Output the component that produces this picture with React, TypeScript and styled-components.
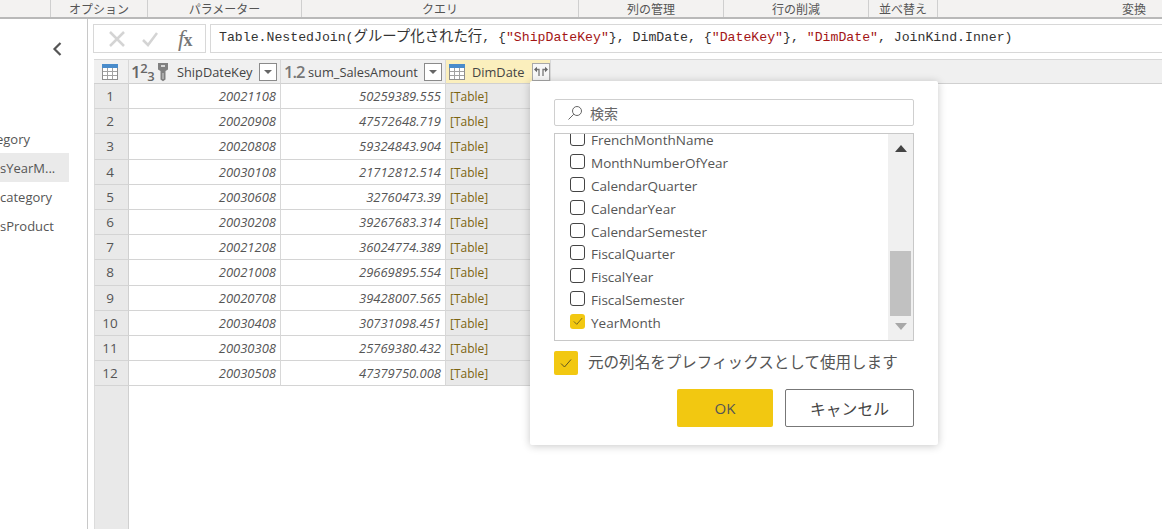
import React from 'react';
import styled, { createGlobalStyle } from 'styled-components';

const Global = createGlobalStyle`
  html, body { margin: 0; padding: 0; background: #fff; overflow: hidden; }
  * { box-sizing: border-box; }
`;
const ui = `"Open Sans", "Noto Sans CJK JP", sans-serif`;
const Page = styled.div`
  position: relative; width: 1162px; height: 529px; overflow: hidden;
  display: flex; flex-direction: column; font-family: ${ui}; color: #555;
`;
const Ribbon = styled.div`
  display: grid; height: 19px; flex: none; background: #f3f2f1; border-bottom: 2px solid #b9b9b9; overflow: hidden;
  grid-template-columns: 51px 97px 154px 277px 145px 145px 69px 392px;
`;
const RibbonGroup = styled.div<{ $sep?: boolean }>`
  height: 17px; font-size: 12px; line-height: 19px; text-align: center; color: #555; white-space: nowrap;
  overflow: hidden; border-right: ${p => (p.$sep ? '1px solid #cfcfcf' : '0')};
`;
const Body = styled.div`display: flex; flex: 1; min-height: 0;`;
const Side = styled.aside`
  width: 88px; flex: none; border-right: 1px solid #c8c8c8; display: flex; flex-direction: column;
`;
const Collapse = styled.div`height: 60px; padding: 21px 0 0 52px; flex: none;`;
const QueryList = styled.div`display: flex; flex-direction: column; margin-top: 45px; width: 69px;`;
const Query = styled.div<{ $active?: boolean; $indent?: number }>`
  height: 29px; line-height: 30px; font-size: 13px; color: #555; white-space: nowrap; overflow: hidden;
  text-indent: ${p => p.$indent ?? 0}px;
  background: ${p => (p.$active ? '#eaeaea' : 'transparent')};
`;
const Main = styled.main`flex: 1; min-width: 0; padding: 5px 0 0 5px; display: flex; flex-direction: column;`;
const FormulaRow = styled.div`display: flex; gap: 4px; height: 29px; flex: none;`;
const FormulaTools = styled.div`
  width: 113px; border: 1px solid #d8d8d8; display: flex; align-items: center; padding-left: 14px; gap: 15px;
`;
const Fx = styled.span`
  font-family: "Liberation Serif", serif; font-style: italic; font-size: 23px; color: #777; margin-left: 4px; line-height: 1;
  b { font-style: normal; font-size: 18px; font-weight: 700; margin-left: -1px; }
`;
const Formula = styled.div`
  flex: 1; border: 1px solid #d8d8d8; border-right: 0; padding-left: 8px; line-height: 26px; white-space: pre;
  font-family: "Liberation Mono", "Noto Sans CJK JP", monospace; font-size: 13.2px; color: #333;
`;
const Cjk = styled.span`font-family: "Noto Sans CJK JP", sans-serif; font-size: 14.4px; line-height: 1;`;
const Str = styled.span`color: #a31515;`;
const Table = styled.div`
  margin: 6px 0 0 1px; flex: 1; display: grid; position: relative;
  grid-template-columns: 35px 152px 165px 105px 1fr;
  grid-template-rows: 25px repeat(12, 25.2px) 1fr;
`;
const Head = styled.div<{ $sel?: boolean }>`
  background: ${p => (p.$sel ? '#fbefbd' : '#f0f0f0')};
  border-top: 1px solid #d8d8d8; border-bottom: 1px solid #d0d0d0; border-right: 1px solid #d8d8d8;
  display: flex; align-items: center; font-size: 12.8px; color: #444; min-width: 0; white-space: nowrap;
`;
const HeadFill = styled.div`background: #f0f0f0; border-top: 1px solid #d8d8d8; border-bottom: 1px solid #d0d0d0;`;
const CornerHead = styled(Head)`justify-content: center; padding-right: 2px;`;
const TypeNum = styled.span`
  font-size: 17px; color: #666; width: 27px; margin-left: 2px; font-weight: 600; flex: none; letter-spacing: -.5px; line-height: 1;
  sup { font-size: 13px; vertical-align: 5px; line-height: 0; }
  sub { font-size: 13px; vertical-align: -3px; line-height: 0; }
`;
const KeyWrap = styled.span`display: flex; flex: none; margin-right: 9px;`;
const Decimal = styled.span`
  font-size: 16.5px; color: #777; font-weight: 600; width: 24px; margin-left: 3px; flex: none; letter-spacing: -1px;
`;
const Title = styled.span`flex: 1; min-width: 0;`;
const HeadBtn = styled.div`
  width: 18px; height: 18px; flex: none; background: #fff; border: 1px solid #8a8a8a; margin-right: 3px;
  display: flex; align-items: center; justify-content: center;
`;
const ExpandBtn = styled(HeadBtn)`background: #f7f7f7; border-color: #a8a8a8; margin-right: 0;`;
const Arrow = styled.i`
  width: 0; height: 0; border-left: 4px solid transparent; border-right: 4px solid transparent; border-top: 4px solid #666;
`;
const RowNum = styled.div<{ $fill?: boolean }>`
  background: #e9e9e9; border-right: 1px solid #d0d0d0; border-left: 1px solid #dcdcdc;
  border-bottom: ${p => (p.$fill ? 0 : '1px solid #d4d4d4')};
  font-size: 13.5px; color: #555; display: flex; align-items: center; justify-content: center; padding-right: 3px;
`;
const Cell = styled.div`
  border-right: 1px solid #d8d8d8; border-bottom: 1px solid #d4d4d4; font-style: italic; font-size: 13px; color: #555;
  text-align: right; padding-right: 4px; line-height: 25px; white-space: nowrap; overflow: hidden;
`;
const TableCell = styled.div`
  background: #e9e9e9; border-bottom: 1px solid #d4d4d4; border-right: 1px solid #d8d8d8; font-size: 12px; color: #7c6410;
  padding-left: 4px; line-height: 25px;
`;
const Filler = styled.div`grid-column: 2 / -1;`;
const Blank = styled.div``;
const Dialog = styled.section`
  position: absolute; left: 530px; top: 81px; width: 408px; height: 364px; background: #fff;
  box-shadow: 0 1px 9px rgba(0,0,0,.22); padding: 18px 24px; display: flex; flex-direction: column; border-radius: 2px;
`;
const Search = styled.div`
  height: 27px; flex: none; border: 1px solid #cfcfcf; border-radius: 2px; display: flex; align-items: center; padding-left: 12px; gap: 7px;
  font-size: 14px; color: #666;
`;
const List = styled.div`
  margin-top: 7px; height: 208px; flex: none; border: 1px solid #c8c8c8; display: flex; overflow: hidden;
`;
const Items = styled.div`flex: 1; padding-left: 15px; overflow: hidden; margin-top: -5px;`;
const Item = styled.div`
  display: flex; align-items: center; gap: 6px; height: 22.8px; font-size: 13.5px; color: #555; white-space: nowrap;
`;
const Box = styled.span<{ $on?: boolean; $size: number }>`
  width: ${p => p.$size}px; height: ${p => p.$size}px; flex: none; border-radius: ${p => (p.$size > 20 ? 2 : 3)}px;
  background: ${p => (p.$on ? '#f2c811' : '#fff')}; border: ${p => (p.$on ? '0' : '1px solid #444')};
  display: flex; align-items: center; justify-content: center;
`;
const ItemBox = styled(Box)`margin-bottom: 3px;`;
const Scroll = styled.div`
  width: 25px; flex: none; background: #f0f0f0; display: flex; flex-direction: column; align-items: center; position: relative; padding: 11px 2px 0;
`;
const Up = styled.i`width: 0; height: 0; border-left: 6px solid transparent; border-right: 6px solid transparent; border-bottom: 7px solid #444; flex: none;`;
const Thumb = styled.div`width: 21px; height: 65px; background: #c1c1c1; margin-top: 99px; flex: none;`;
const Down = styled.i`width: 0; height: 0; border-left: 6px solid transparent; border-right: 6px solid transparent; border-top: 7px solid #a8a8a8; margin-top: 7px; flex: none;`;
const Prefix = styled.div`
  margin-top: 10px; height: 24px; flex: none; display: flex; align-items: center; gap: 10px; font-size: 15.55px; color: #555; white-space: nowrap;
`;
const PrefixLabel = styled.span`margin-bottom: 3px;`;
const Actions = styled.div`margin-top: 14px; display: flex; justify-content: flex-end; gap: 12px;`;
const Ok = styled.div`
  width: 96px; height: 38px; background: #f2c811; border-radius: 2px; font-size: 15px; color: #555;
  display: flex; align-items: center; justify-content: center;
`;
const Cancel = styled.div`
  width: 129px; height: 38px; border: 1px solid #777; border-radius: 2px; font-size: 15.8px; color: #444;
  display: flex; align-items: center; justify-content: center;
`;
const HeadTable = styled.svg`margin-left: 3px; margin-right: 7px; flex: none;`;

const TableGlyph = () => (
  <>
    <rect x=".5" y=".5" width="15" height="15" fill="#fff" stroke="#8f8f8f" />
    <rect width="16" height="4" fill="#4a8ccb" />
    <path d="M5.500 4v11M10.500 4v11M1 7.500h14M1 11.500h14" stroke="#a2a2a2" fill="none" />
  </>
);
const KeyIcon = () => (
  <svg width="10" height="20" viewBox="0 0 10 20">
    <path d="M0 1h10v6.500l-2.500 1.500v8.500l-2.500 1.800-2.500-1.800v-8.500L0 7.500z" fill="#808080" />
    <rect x="3" y="3" width="4" height="2" fill="#d6d6d6" />
    <path d="M5 11v6" stroke="#d6d6d6" />
  </svg>
);
const ExpandIcon = () => (
  <svg width="14" height="12" viewBox="0 0 14 12">
    <path d="M0 3.500 3 .8v5.400z" fill="#666" />
    <path d="M2.500 3.500H5V10" fill="none" stroke="#777" strokeWidth="1.300" />
    <path d="M14 3.500 11 .8v5.400z" fill="#666" />
    <path d="M11.500 3.500H9V10" fill="none" stroke="#777" strokeWidth="1.300" />
  </svg>
);
const Check = ({ s }: { s: number }) => (
  <svg width={s} height={s} viewBox="0 0 12 12">
    <path d="M1 6.500 4.500 10 11 2.500" fill="none" stroke="#5f5520" strokeWidth="1" />
  </svg>
);
const Magnifier = () => (
  <svg width="16" height="16" viewBox="0 0 16 16">
    <circle cx="10" cy="6" r="4.500" fill="none" stroke="#666" strokeWidth="1" />
    <path d="M6.800 9.200 1.500 14.500" stroke="#666" strokeWidth="1" />
  </svg>
);

const groups = ['', 'オプション', 'パラメーター', 'クエリ', '列の管理', '行の削減', '並べ替え', '変換'];
const rows = [
  ['20021108', '50259389.555'], ['20020908', '47572648.719'], ['20020808', '59324843.904'], ['20030108', '21712812.514'],
  ['20030608', '32760473.39'], ['20030208', '39267683.314'], ['20021208', '36024774.389'], ['20021008', '29669895.554'],
  ['20020708', '39428007.565'], ['20030408', '30731098.451'], ['20030308', '25769380.432'], ['20030508', '47379750.008'],
];
const fields = ['FrenchMonthName', 'MonthNumberOfYear', 'CalendarQuarter', 'CalendarYear', 'CalendarSemester', 'FiscalQuarter', 'FiscalYear', 'FiscalSemester'];

export default function App() {
  return (
    <Page>
      <Global />
      <Ribbon>
        {groups.map((g, i) => <RibbonGroup key={i} $sep={i < 7}>{g}</RibbonGroup>)}
      </Ribbon>
      <Body>
        <Side>
          <Collapse>
            <svg width="11" height="16" viewBox="0 0 11 16"><path d="M8.500 2 2.500 8l6 6" fill="none" stroke="#555" strokeWidth="2.200" /></svg>
          </Collapse>
          <QueryList>
            <Query $indent={-4}>egory</Query>
            <Query $active>sYearM...</Query>
            <Query>category</Query>
            <Query>sProduct</Query>
          </QueryList>
        </Side>
        <Main>
          <FormulaRow>
            <FormulaTools>
              <svg width="18" height="18" viewBox="0 0 18 18"><path d="M2 2l14 14M16 2 2 16" stroke="#d4d4d4" strokeWidth="2.500" /></svg>
              <svg width="18" height="16" viewBox="0 0 18 16"><path d="M2 9l5 5L16 2" fill="none" stroke="#d4d4d4" strokeWidth="2.500" /></svg>
              <Fx>f<b>x</b></Fx>
            </FormulaTools>
            <Formula>Table.NestedJoin(<Cjk>グループ化された行</Cjk>, {'{'}<Str>"ShipDateKey"</Str>{'}'}, DimDate, {'{'}<Str>"DateKey"</Str>{'}'}, <Str>"DimDate"</Str>, JoinKind.Inner)</Formula>
          </FormulaRow>
          <Table>
            <CornerHead><svg width="16" height="16" viewBox="0 0 16 16"><TableGlyph /></svg></CornerHead>
            <Head>
              <TypeNum>1<sup>2</sup><sub>3</sub></TypeNum>
              <KeyWrap><KeyIcon /></KeyWrap>
              <Title>ShipDateKey</Title>
              <HeadBtn><Arrow /></HeadBtn>
            </Head>
            <Head>
              <Decimal>1.2</Decimal>
              <Title>sum_SalesAmount</Title>
              <HeadBtn><Arrow /></HeadBtn>
            </Head>
            <Head $sel>
              <HeadTable width="16" height="16" viewBox="0 0 16 16"><TableGlyph /></HeadTable>
              <Title>DimDate</Title>
              <ExpandBtn><ExpandIcon /></ExpandBtn>
            </Head>
            <HeadFill />
            {rows.map((r, i) => (
              <React.Fragment key={i}>
                <RowNum>{i + 1}</RowNum>
                <Cell>{r[0]}</Cell>
                <Cell>{r[1]}</Cell>
                <TableCell>[Table]</TableCell>
                <Blank />
              </React.Fragment>
            ))}
            <RowNum $fill />
            <Filler />
          </Table>
        </Main>
      </Body>
      <Dialog>
        <Search><Magnifier />検索</Search>
        <List>
          <Items>
            {fields.map(f => (
              <Item key={f}><ItemBox $size={15} />{f}</Item>
            ))}
            <Item><ItemBox $size={15} $on><Check s={10} /></ItemBox>YearMonth</Item>
          </Items>
          <Scroll>
            <Up />
            <Thumb />
            <Down />
          </Scroll>
        </List>
        <Prefix><Box $size={24} $on><Check s={12} /></Box><PrefixLabel>元の列名をプレフィックスとして使用します</PrefixLabel></Prefix>
        <Actions>
          <Ok>OK</Ok>
          <Cancel>キャンセル</Cancel>
        </Actions>
      </Dialog>
    </Page>
  );
}
